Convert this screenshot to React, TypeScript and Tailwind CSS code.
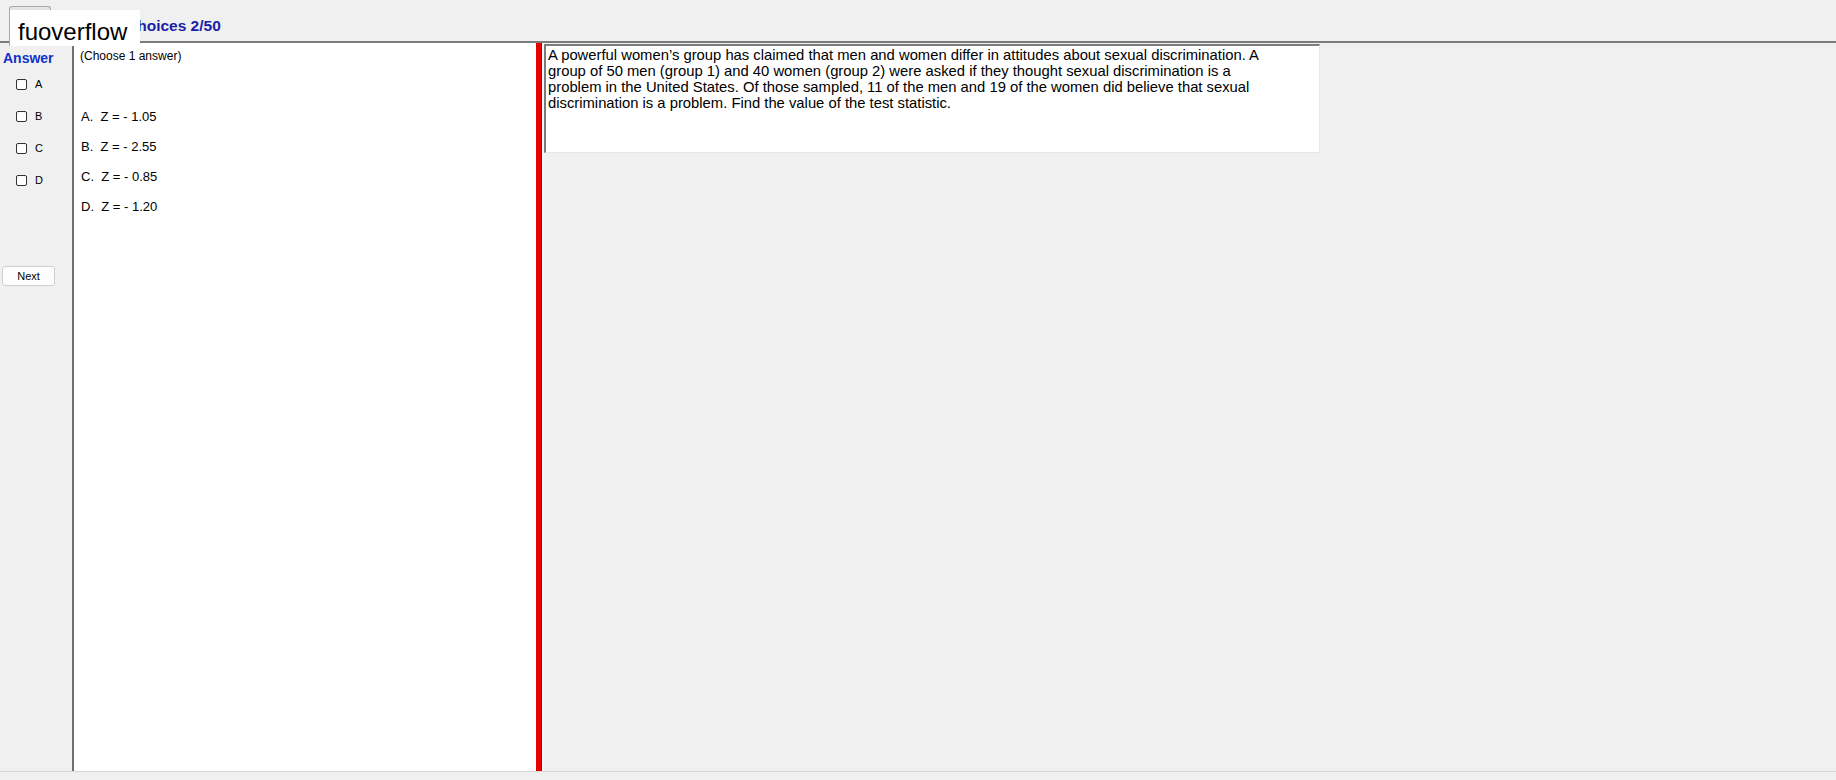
import React from "react";

const options = [
  { key: "A", text: "Z = - 1.05" },
  { key: "B", text: "Z = - 2.55" },
  { key: "C", text: "Z = - 0.85" },
  { key: "D", text: "Z = - 1.20" },
];

const question =
  "A powerful women’s group has claimed that men and women differ in attitudes about sexual discrimination. A group of 50 men (group 1) and 40 women (group 2) were asked if they thought sexual discrimination is a problem in the United States. Of those sampled, 11 of the men and 19 of the women did believe that sexual discrimination is a problem. Find the value of the test statistic.";

export default function App() {
  return (
    <div
      className="relative flex h-[780px] w-[1836px] flex-col overflow-hidden bg-[#f0f0f0] text-black"
      style={{ fontFamily: '"Liberation Sans", Arial, sans-serif' }}
    >
      {/* header */}
      <div className="relative h-[43px] shrink-0 border-b-2 border-[#7c7c7c]">
        <span className="absolute left-[126px] top-[18px] text-[15.5px] font-bold leading-none text-[#1a1ea6]">
          Choices 2/50
        </span>
      </div>

      {/* tab + watermark overlay */}
      <div className="absolute left-[9px] top-[6px] h-[40px] w-[42px] rounded-t-[3px] border border-b-0 border-[#a8a8a8] bg-[#e4e4e4]" />
      <div className="absolute left-[10px] top-[10px] h-[36px] w-[130px] bg-white pl-[8px] pt-[10px] text-[24px] leading-none">
        fuoverflow
      </div>

      {/* body */}
      <div className="flex h-[729px] shrink-0 border-b border-[#d6d6d6]">
        {/* answer column */}
        <div className="flex w-[72px] shrink-0 flex-col">
          <div className="pl-[3px] pt-[7px] text-[14px] font-bold leading-[16px] text-[#1232c8]">Answer</div>
          <div className="flex flex-col gap-[21px] pt-[13px]">
            {options.map((o) => (
              <label key={o.key} className="flex h-[11px] items-center pl-[16px]">
                <span className="h-[11px] w-[11px] rounded-[2px] border border-[#333] bg-white" />
                <span className="pl-[8px] text-[11px] leading-none">{o.key}</span>
              </label>
            ))}
          </div>
          <button className="ml-[2px] mt-[80px] h-[20px] w-[53px] rounded-[3px] border border-[#cfcfcf] bg-[#fdfdfd] text-[11px] leading-none">
            Next
          </button>
        </div>

        {/* options panel */}
        <div className="w-[464px] shrink-0 border-l-2 border-[#707070] bg-white pl-[6px] pt-[5px]">
          <div className="text-[12px] leading-[16px]">(Choose 1 answer)</div>
          <div className="flex flex-col pt-[45px]">
            {options.map((o) => (
              <div key={o.key} className="h-[30px] whitespace-pre pl-[1px] text-[13px] leading-[16px]">
                {`${o.key}.  ${o.text}`}
              </div>
            ))}
          </div>
        </div>

        {/* splitter */}
        <div className="w-[6px] shrink-0 border-r border-[#8a1010] bg-[#e60000]" />
        <div className="w-[2px] shrink-0 bg-[#f7f7f7]" />

        {/* question */}
        <div className="flex flex-1 items-start">
          <div className="mt-[1px] h-[109px] w-[776px] border-l-2 border-t-2 border-[#7c7c7c] border-b border-r border-b-[#e6e6e6] border-r-[#e6e6e6] bg-white pl-[2px] pt-[1px]">
            <p className="w-[726px] text-[14.8px] leading-[16px]">{question}</p>
          </div>
        </div>
      </div>
    </div>
  );
}
